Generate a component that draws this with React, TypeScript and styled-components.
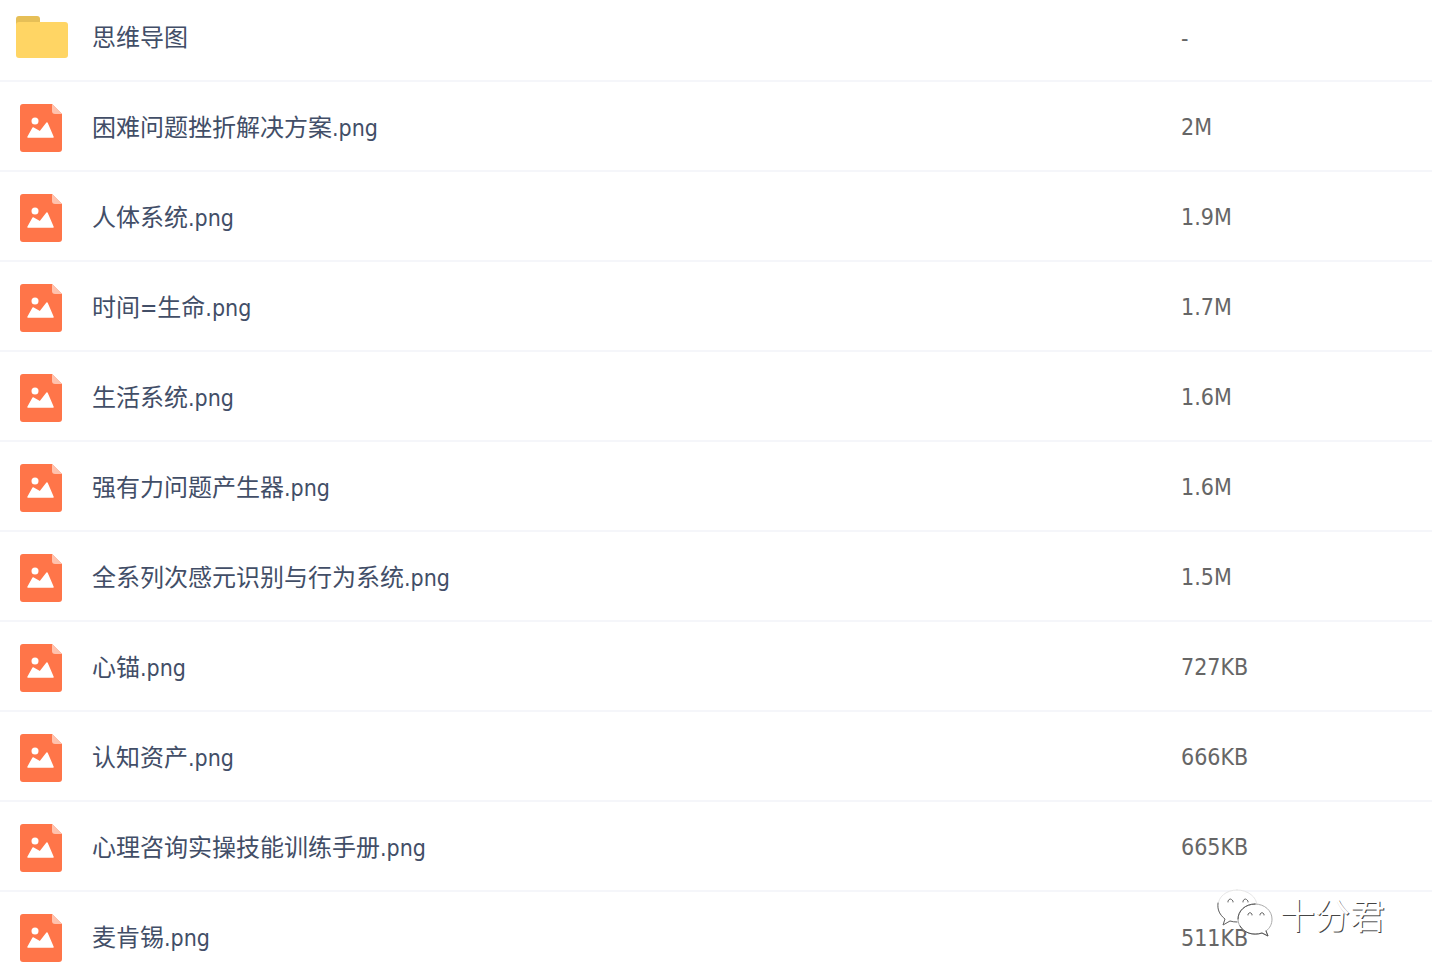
import React from "react";
import styled, { createGlobalStyle } from "styled-components";

const GlobalStyle = createGlobalStyle`
  body {
    margin: 0;
    background: #fff;
    font-family: "DejaVu Sans Condensed", "Noto Sans CJK SC", sans-serif;
  }
`;

const Page = styled.main`
  position: relative;
  overflow: hidden;
`;

const FileTable = styled.table`
  width: 100%;
  table-layout: fixed;
  border-collapse: separate;
  border-spacing: 0;
`;

const Cell = styled.td`
  height: 84px;
  padding: 4px 0 0;
  border-bottom: 2px solid #f5f6fa;
  vertical-align: middle;
  line-height: 32px;
  white-space: nowrap;

  tr:first-child > & {
    height: 76px;
    padding-top: 0;
    padding-bottom: 4px;
  }

  tr:last-child > & {
    height: 80px;
    padding-top: 6px;
    border-bottom: 0;
  }
`;

const NameCell = styled(Cell)`
  width: auto;
`;

const SizeCell = styled(Cell)`
  width: 251px;
  padding-top: 2px;
  color: #666;
  font-size: 23px;
`;

const FileLink = styled.a`
  display: flex;
  align-items: center;
  color: #424e67;
  font-size: 24px;
  text-decoration: none;
`;

const IconBox = styled.span`
  display: flex;
  flex: none;
  width: 76px;
  padding-left: 16px;
`;

const Latin = styled.span`
  font-size: 23px;
`;

const Watermark = styled.div`
  position: absolute;
  right: 47px;
  bottom: 38px;
  display: flex;
  align-items: center;
  gap: 6px;
  color: #fff;
  font-family: "Noto Sans CJK SC", sans-serif;
  font-size: 35px;
  font-weight: 400;
  line-height: 48px;
  text-shadow: 1px 1px 0 #444;
`;

const FolderIcon = () => (
  <svg width="52" height="52" viewBox="0 0 52 52" aria-hidden="true">
    <path d="M0 20V7q0-3 3-3h18q3 0 3 3v13z" fill="#e6bf57" />
    <rect y="10" width="52" height="36" rx="3" fill="#ffd564" />
  </svg>
);

const ImageIcon = () => (
  <svg width="52" height="52" viewBox="0 0 52 52" aria-hidden="true">
    <path d="M7 2h29l10 10v35q0 3-3 3H7q-3 0-3-3V5q0-3 3-3z" fill="#ff7549" />
    <path d="M36 2l10 10h-7q-3 0-3-3z" fill="#ffc2ae" />
    <circle cx="19" cy="19" r="3.5" fill="#fff" />
    <path
      d="M12 35l5-9 7 4 7-9 6 14z"
      fill="#fff"
      stroke="#fff"
      strokeWidth="1.5"
      strokeLinejoin="round"
    />
  </svg>
);

type FileEntry = { name: string; size: string; folder?: boolean };

const files: FileEntry[] = [
  { name: "思维导图", size: "-", folder: true },
  { name: "困难问题挫折解决方案.png", size: "2M" },
  { name: "人体系统.png", size: "1.9M" },
  { name: "时间=生命.png", size: "1.7M" },
  { name: "生活系统.png", size: "1.6M" },
  { name: "强有力问题产生器.png", size: "1.6M" },
  { name: "全系列次感元识别与行为系统.png", size: "1.5M" },
  { name: "心锚.png", size: "727KB" },
  { name: "认知资产.png", size: "666KB" },
  { name: "心理咨询实操技能训练手册.png", size: "665KB" },
  { name: "麦肯锡.png", size: "511KB" },
];

const FileName = ({ name }: { name: string }) => (
  <span>
    {name.split(/([\x20-\x7e]+)/).map((part, i) =>
      i % 2 ? <Latin key={i}>{part}</Latin> : part
    )}
  </span>
);

const FileRow = ({ file }: { file: FileEntry }) => (
  <tr>
    <NameCell>
      <FileLink href="#">
        <IconBox>{file.folder ? <FolderIcon /> : <ImageIcon />}</IconBox>
        <FileName name={file.name} />
      </FileLink>
    </NameCell>
    <SizeCell>{file.size}</SizeCell>
  </tr>
);

const ChatLogo = () => (
  <svg width="58" height="52" viewBox="0 0 58 52" fill="#fff" strokeLinecap="round" aria-hidden="true">
    <path d="M21 2C10 2 2 9 2 18c0 6 3 10 7 13l-2 6 7-4q4 1 9 1c10 0 18-7 18-16S32 2 21 2z" stroke="#e6e6e6" />
    <path d="M2 15c-1 7 2 12 7 16l-2 6 7-4q3 1 7 1" fill="none" stroke="#666" />
    <path d="M39 16c-10 0-17 7-17 15s7 15 17 15q4 0 7-1l6 3-2-5c4-3 6-7 6-12 0-8-7-15-17-15z" stroke="#aaa" />
    <path d="M22 31c0-8 7-15 17-15M24 38c4 7 13 10 22 7l6 3-2-5" fill="none" stroke="#555" />
    <path d="M12 14v-1q2-4 5 0v1M27 14v-1q2-4 5 0v1M32 27v-1q2-3 4 0v1M44 27v-1q2-3 4 0v1" fill="none" stroke="#666" />
  </svg>
);

export default function App() {
  return (
    <>
      <GlobalStyle />
      <Page>
        <FileTable>
          <tbody>
            {files.map((file) => (
              <FileRow key={file.name} file={file} />
            ))}
          </tbody>
        </FileTable>
        <Watermark>
          <ChatLogo />
          <span>十分君</span>
        </Watermark>
      </Page>
    </>
  );
}
